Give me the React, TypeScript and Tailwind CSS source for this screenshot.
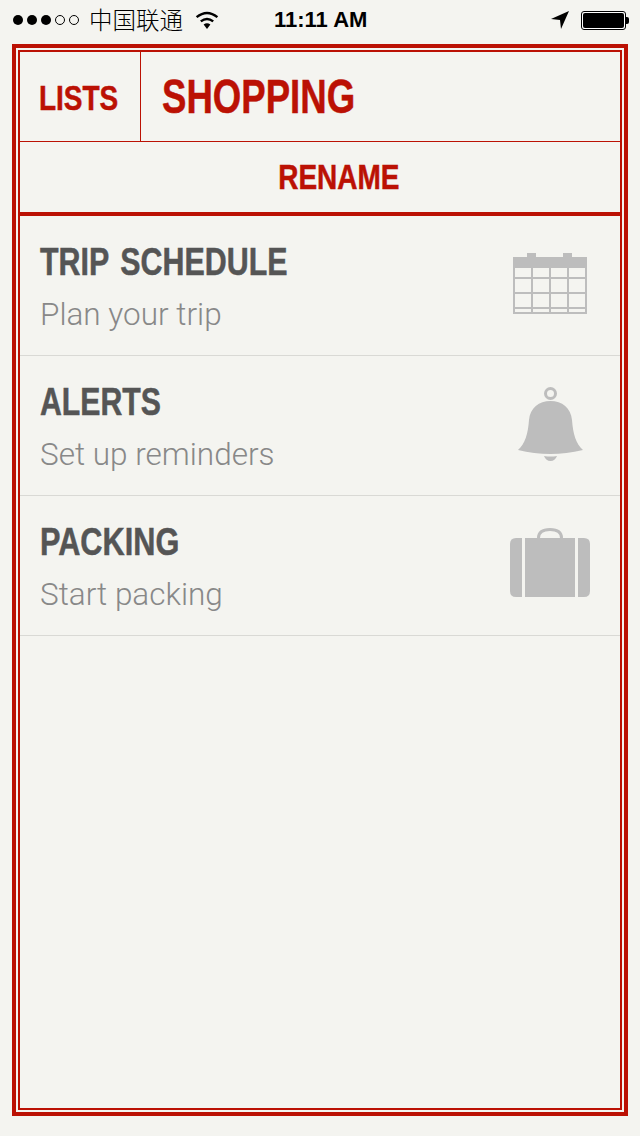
import { ReactNode } from 'react';

const CONDENSED = 'font-["Liberation_Sans",sans-serif] font-bold [-webkit-text-stroke:0.5px]';

function CalendarIcon() {
  const xs = [3, 21, 39, 57, 75];
  const ys = [31, 46, 61];
  return (
    <svg width="80" height="80" viewBox="0 0 80 80" fill="#bdbdbd">
      <rect x="17" y="7" width="9" height="5" />
      <rect x="53" y="7" width="9" height="5" />
      <rect x="3" y="11" width="74" height="11" />
      {xs.map((x) => (
        <rect key={x} x={x} y="22" width="2" height="46" />
      ))}
      {ys.map((y) => (
        <rect key={y} x="3" y={y} width="74" height="2" />
      ))}
      <rect x="3" y="66" width="74" height="2" />
    </svg>
  );
}

function BellIcon() {
  return (
    <svg width="80" height="80" viewBox="0 0 80 80" fill="#bdbdbd">
      <circle cx="40.5" cy="7.5" r="5" fill="none" stroke="#bdbdbd" strokeWidth="3" />
      <path d="M40.5 15 C52 15 61 22 62 34 C63 48 66 58 73 64 Q56 68 40.5 68 Q24 68 8 64 C15 58 18 48 19 34 C20 22 29 15 40.5 15Z" />
      <path d="M34 70 Q40.5 71 47 70 Q45 75 40.5 75 Q36 75 34 70Z" />
    </svg>
  );
}

function SuitcaseIcon() {
  return (
    <svg width="80" height="80" viewBox="0 0 80 80" fill="#bdbdbd">
      <path d="M28.5 12 C28.5 6 33 3.5 40 3.5 C47 3.5 51.5 6 51.5 12" fill="none" stroke="#bdbdbd" strokeWidth="3" />
      <path d="M12 12 V71 H6 Q0 71 0 65 V18 Q0 12 6 12Z" />
      <rect x="15" y="12" width="50" height="59" />
      <path d="M68 12 V71 H74 Q80 71 80 65 V18 Q80 12 74 12Z" />
    </svg>
  );
}

function Row({ title, sub, squeeze, icon }: { title: string; sub: string; squeeze: string; icon: ReactNode }) {
  return (
    <div className="flex h-[140px] justify-between border-b border-[#d9d9d5] pl-[20px] pr-[30px]">
      <div>
        <div className={`${CONDENSED} mt-[24px] whitespace-nowrap text-[38px] leading-[44px] text-[#555555]`}>
          <span className={`inline-block origin-left ${squeeze}`}>{title}</span>
        </div>
        <div className="mt-[9px] font-['Roboto',sans-serif] text-[31.5px] font-light leading-[44px] text-[#888888]">{sub}</div>
      </div>
      <div className="pt-[30px]">{icon}</div>
    </div>
  );
}

function StatusBar() {
  return (
    <div className="flex h-[44px] items-center pb-[4px] pl-[13px] text-black">
      <div className="flex gap-[4px]">
        <span className="h-[10px] w-[10px] rounded-full bg-black" />
        <span className="h-[10px] w-[10px] rounded-full bg-black" />
        <span className="h-[10px] w-[10px] rounded-full bg-black" />
        <span className="h-[10px] w-[10px] rounded-full border border-black" />
        <span className="h-[10px] w-[10px] rounded-full border border-black" />
      </div>
      <span className="ml-[10px] font-['Noto_Sans_CJK_SC',sans-serif] text-[23.5px] font-light leading-none">中国联通</span>
      <svg className="ml-[12px]" width="24" height="18" viewBox="0 0 24 18">
        <path d="M12 18 L8.6 13.6 Q12 11 15.4 13.6Z" />
        <path d="M5.8 10.4 Q12 5.4 18.2 10.4" fill="none" stroke="#000" strokeWidth="2.4" />
        <path d="M1.6 6.2 Q12 -2.4 22.4 6.2" fill="none" stroke="#000" strokeWidth="2.4" />
      </svg>
      <span className="ml-[55px] font-['Liberation_Sans',sans-serif] text-[22px] font-bold leading-none">11:11 AM</span>
      <svg className="ml-auto" width="18" height="18" viewBox="0 0 18 18">
        <path d="M18 0 L0 8 L9 9 L10 18Z" />
      </svg>
      <div className="ml-[12px] mr-[11px] flex items-center">
        <div className="h-[19px] w-[45px] rounded-[3px] border border-black bg-white p-[1px]">
          <div className="h-full w-full rounded-[2px] bg-black" />
        </div>
        <div className="h-[7px] w-[3px] rounded-r-[2px] bg-black" />
      </div>
    </div>
  );
}

export default function App() {
  return (
    <div className="h-[1136px] w-[640px] overflow-hidden bg-[#f4f4f0]">
      <StatusBar />
      <div className="mx-[12px] h-[1072px] border-4 border-[#bb1104] p-[2px]">
        <div className="h-full border-2 border-[#bb1104]">
          <div className="flex h-[90px] border-b border-[#bb1104]">
            <div className={`${CONDENSED} flex w-[121px] items-center justify-center border-r border-[#bb1104] pr-[3px] pt-[4px] text-[35px] text-[#bb1104]`}>
              <span className="inline-block scale-x-[.8]">LISTS</span>
            </div>
            <div className={`${CONDENSED} flex items-center pl-[21px] text-[48px] text-[#bb1104]`}>
              <span className="inline-block origin-left scale-x-[.762]">SHOPPING</span>
            </div>
          </div>
          <div className={`${CONDENSED} flex h-[74px] items-center justify-center border-b-4 border-[#bb1104] pl-[37px] text-[35px] text-[#bb1104]`}>
            <span className="inline-block scale-x-[.8]">RENAME</span>
          </div>
          <Row title="TRIP SCHEDULE" sub="Plan your trip" squeeze="scale-x-[.8] [word-spacing:4px]" icon={<CalendarIcon />} />
          <Row title="ALERTS" sub="Set up reminders" squeeze="scale-x-[.796]" icon={<BellIcon />} />
          <Row title="PACKING" sub="Start packing" squeeze="scale-x-[.808]" icon={<SuitcaseIcon />} />
        </div>
      </div>
    </div>
  );
}
